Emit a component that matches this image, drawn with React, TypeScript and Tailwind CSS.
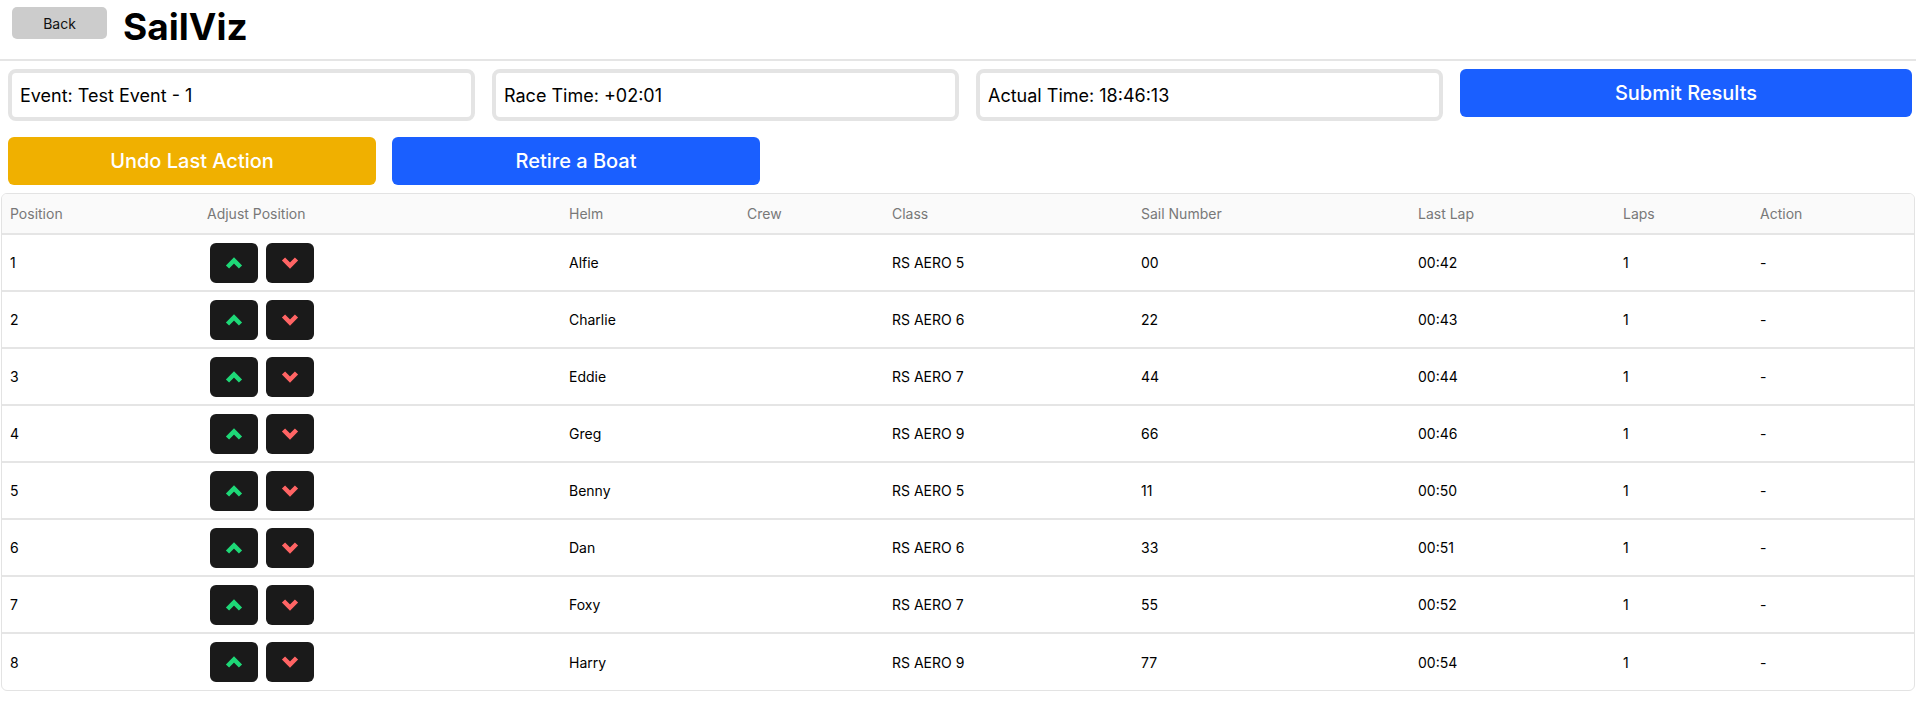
import React from "react";

const rows = [
  { pos: 1, helm: "Alfie", cls: "RS AERO 5", sail: "00", last: "00:42" },
  { pos: 2, helm: "Charlie", cls: "RS AERO 6", sail: "22", last: "00:43" },
  { pos: 3, helm: "Eddie", cls: "RS AERO 7", sail: "44", last: "00:44" },
  { pos: 4, helm: "Greg", cls: "RS AERO 9", sail: "66", last: "00:46" },
  { pos: 5, helm: "Benny", cls: "RS AERO 5", sail: "11", last: "00:50" },
  { pos: 6, helm: "Dan", cls: "RS AERO 6", sail: "33", last: "00:51" },
  { pos: 7, helm: "Foxy", cls: "RS AERO 7", sail: "55", last: "00:52" },
  { pos: 8, helm: "Harry", cls: "RS AERO 9", sail: "77", last: "00:54" },
];

function Chevron({ up, color }: { up: boolean; color: string }) {
  return (
    <svg width="18" height="14" viewBox="0 0 18 14" className="block">
      <polyline
        points={up ? "2.5,11 9,4.5 15.5,11" : "2.5,3 9,9.5 15.5,3"}
        fill="none"
        stroke={color}
        strokeWidth="4.5"
        strokeLinejoin="miter"
        strokeLinecap="butt"
      />
    </svg>
  );
}

const headers = [
  "Position",
  "Adjust Position",
  "Helm",
  "Crew",
  "Class",
  "Sail Number",
  "Last Lap",
  "Laps",
  "Action",
];

export default function App() {
  return (
    <div
      className="w-[1916px] min-h-[719px] bg-white text-black"
      style={{ fontFamily: "Inter, 'Noto Sans', sans-serif" }}
    >
      <div className="flex items-start gap-4 pl-3 pt-[7px] h-[61px] border-b-2 border-[#e5e5e5]">
        <button className="w-[95px] h-[32px] bg-[#cccccc] rounded-[5px] text-[14px] text-[#111]">
          Back
        </button>
        <h1 className="text-[37px] leading-[40px] font-bold">SailViz</h1>
      </div>

      <div className="flex gap-[17px] pl-2 pr-1 mt-2">
        {["Event: Test Event - 1", "Race Time: +02:01", "Actual Time: 18:46:13"].map((t) => (
          <div
            key={t}
            className="w-[467px] h-[52px] border-4 border-[#e4e4e4] rounded-[8px] flex items-center px-2 text-[18px]"
          >
            {t}
          </div>
        ))}
        <button className="flex-1 h-[48px] bg-[#1a5fff] rounded-[6px] text-white text-[20px] font-medium">
          Submit Results
        </button>
      </div>

      <div className="flex gap-4 pl-2 mt-4">
        <button className="w-[368px] h-[48px] bg-[#f0b000] rounded-[6px] text-white text-[20px] font-medium">
          Undo Last Action
        </button>
        <button className="w-[368px] h-[48px] bg-[#1a5fff] rounded-[6px] text-white text-[20px] font-medium">
          Retire a Boat
        </button>
      </div>

      <div className="mt-2 ml-px mr-px border border-[#e3e3e3] rounded-[6px] overflow-hidden">
        <table className="w-full table-fixed border-collapse text-[14px]">
          <colgroup>
            <col className="w-[197px]" />
            <col className="w-[362px]" />
            <col className="w-[178px]" />
            <col className="w-[145px]" />
            <col className="w-[249px]" />
            <col className="w-[277px]" />
            <col className="w-[205px]" />
            <col className="w-[137px]" />
            <col />
          </colgroup>
          <thead>
            <tr className="bg-[#fafafa] h-[40px] border-b-2 border-[#e5e5e5]">
              {headers.map((h) => (
                <th key={h} className="text-left font-normal text-[#787878] px-2">
                  {h}
                </th>
              ))}
            </tr>
          </thead>
          <tbody>
            {rows.map((r, i) => (
              <tr
                key={r.pos}
                className={
                  "h-[57px] " + (i < rows.length - 1 ? "border-b-2 border-[#e5e5e5]" : "")
                }
              >
                <td className="px-2">{r.pos}</td>
                <td className="px-2">
                  <div className="flex gap-2 ml-[3px]">
                    <button className="w-[48px] h-[40px] bg-[#1a1a1a] rounded-[6px] flex items-center justify-center">
                      <Chevron up color="#1ed877" />
                    </button>
                    <button className="w-[48px] h-[40px] bg-[#1a1a1a] rounded-[6px] flex items-center justify-center">
                      <Chevron up={false} color="#ff6464" />
                    </button>
                  </div>
                </td>
                <td className="px-2">{r.helm}</td>
                <td className="px-2"></td>
                <td className="px-2">{r.cls}</td>
                <td className="px-2">{r.sail}</td>
                <td className="px-2">{r.last}</td>
                <td className="px-2">1</td>
                <td className="px-2">-</td>
              </tr>
            ))}
          </tbody>
        </table>
      </div>
    </div>
  );
}
